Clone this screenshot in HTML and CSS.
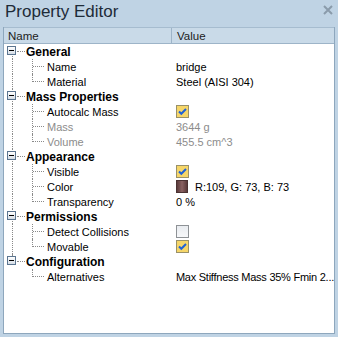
FILE: index.html
```html
<!DOCTYPE html>
<html>
<head>
<meta charset="utf-8">
<link rel="stylesheet" href="styles.css">
</head>
<body>
<div class="window">
  <div class="titlebar">
    <span class="title">Property Editor</span>
    <svg class="close" width="10" height="10" viewBox="0 0 10 10"><path d="M1 1 L9 9 M9 1 L1 9" stroke="#8a9bab" stroke-width="2"/></svg>
  </div>
  <div class="panel">
    <div class="header">
      <div class="hcell hname">Name</div>
      <div class="hcell hvalue">Value</div>
    </div>
    <div class="rows">
      <div class="row group first">
        <div class="name"><span class="i1"><span class="box"></span></span><b>General</b></div>
        <div class="value"></div>
      </div>
      <div class="row child">
        <div class="name"><span class="i1"></span><span class="i2"></span>Name</div>
        <div class="value">bridge</div>
      </div>
      <div class="row child lastchild">
        <div class="name"><span class="i1"></span><span class="i2"></span>Material</div>
        <div class="value">Steel (AISI 304)</div>
      </div>

      <div class="row group">
        <div class="name"><span class="i1"><span class="box"></span></span><b>Mass Properties</b></div>
        <div class="value"></div>
      </div>
      <div class="row child">
        <div class="name"><span class="i1"></span><span class="i2"></span>Autocalc Mass</div>
        <div class="value"><span class="check on"><svg width="11" height="11" viewBox="0 0 11 11"><path d="M2 5.5 L4.3 7.8 L9 3" fill="none" stroke="#1f62d6" stroke-width="2"/></svg></span></div>
      </div>
      <div class="row child dim">
        <div class="name"><span class="i1"></span><span class="i2"></span>Mass</div>
        <div class="value">3644 g</div>
      </div>
      <div class="row child dim lastchild">
        <div class="name"><span class="i1"></span><span class="i2"></span>Volume</div>
        <div class="value">455.5 cm^3</div>
      </div>

      <div class="row group">
        <div class="name"><span class="i1"><span class="box"></span></span><b>Appearance</b></div>
        <div class="value"></div>
      </div>
      <div class="row child">
        <div class="name"><span class="i1"></span><span class="i2"></span>Visible</div>
        <div class="value"><span class="check on"><svg width="11" height="11" viewBox="0 0 11 11"><path d="M2 5.5 L4.3 7.8 L9 3" fill="none" stroke="#1f62d6" stroke-width="2"/></svg></span></div>
      </div>
      <div class="row child">
        <div class="name"><span class="i1"></span><span class="i2"></span>Color</div>
        <div class="value"><span class="swatch"></span>R:109, G: 73, B: 73</div>
      </div>
      <div class="row child lastchild">
        <div class="name"><span class="i1"></span><span class="i2"></span>Transparency</div>
        <div class="value">0 %</div>
      </div>

      <div class="row group">
        <div class="name"><span class="i1"><span class="box"></span></span><b>Permissions</b></div>
        <div class="value"></div>
      </div>
      <div class="row child">
        <div class="name"><span class="i1"></span><span class="i2"></span>Detect Collisions</div>
        <div class="value"><span class="check off"></span></div>
      </div>
      <div class="row child lastchild">
        <div class="name"><span class="i1"></span><span class="i2"></span>Movable</div>
        <div class="value"><span class="check on"><svg width="11" height="11" viewBox="0 0 11 11"><path d="M2 5.5 L4.3 7.8 L9 3" fill="none" stroke="#1f62d6" stroke-width="2"/></svg></span></div>
      </div>

      <div class="row group lastgroup">
        <div class="name"><span class="i1"><span class="box"></span></span><b>Configuration</b></div>
        <div class="value"></div>
      </div>
      <div class="row child lastchild end">
        <div class="name"><span class="i1"></span><span class="i2"></span>Alternatives</div>
        <div class="value"><span class="long">Max Stiffness Mass 35% Fmin 2...</span></div>
      </div>
    </div>
  </div>
</div>
</body>
</html>
```

FILE: styles.css
```css
html, body {
  margin: 0;
  padding: 0;
}
body {
  width: 338px;
  height: 337px;
  overflow: hidden;
  font-family: "Liberation Sans", Arial, sans-serif;
  font-size: 11px;
  color: #000;
}
.window {
  width: 338px;
  height: 337px;
  background: #bfd3e4;
  display: flex;
  flex-direction: column;
  box-sizing: border-box;
  padding: 0 3px 3px 3px;
}
.titlebar {
  height: 27px;
  display: flex;
  align-items: center;
  justify-content: space-between;
  flex: none;
}
.title {
  font-size: 17px;
  color: #1e2b38;
  padding-left: 2px;
  margin-top: -3px;
}
.close {
  margin-right: 2px;
  margin-top: -7px;
}
.panel {
  flex: 1;
  background: #fff;
  border: 1px solid #8ea7bd;
  border-top: none;
  display: flex;
  flex-direction: column;
}
.header {
  height: 15px;
  display: flex;
  background: #c9dae8;
  border-top: 1px solid #a6bccf;
  border-bottom: 1px solid #9db4c8;
  flex: none;
}
.hcell {
  display: flex;
  align-items: center;
  padding-left: 4px;
  color: #1c1c1c;
  font-size: 11.5px;
}
.hname {
  width: 163px;
  border-right: 1px solid #9db4c8;
}
.hvalue {
  flex: 1;
  padding-left: 5px;
}
.rows {
  display: flex;
  flex-direction: column;
}
.row {
  height: 15px;
  display: flex;
  align-items: stretch;
}
.name {
  width: 172px;
  display: flex;
  align-items: center;
  white-space: nowrap;
}
.value {
  flex: 1;
  display: flex;
  align-items: center;
  white-space: nowrap;
}
.long {
  letter-spacing: -0.25px;
}
.dim .name, .dim .value {
  color: #8c8c8c;
}
.group b {
  font-weight: bold;
  font-size: 12px;
  margin-left: 3px;
}
.i1 {
  width: 19px;
  align-self: stretch;
  position: relative;
  flex: none;
}
.i1::before {
  content: "";
  position: absolute;
  left: 8px;
  top: 0;
  bottom: 0;
  border-left: 1px dotted #8a8a8a;
}
.first .i1::before {
  top: 7px;
}
.lastgroup .i1::before {
  bottom: 7px;
}
.end .i1::before {
  display: none;
}
.group .i1::after {
  content: "";
  position: absolute;
  left: 13px;
  width: 8px;
  top: 7px;
  border-top: 1px dotted #8a8a8a;
}
.box {
  position: absolute;
  left: 3px;
  top: 2px;
  width: 9px;
  height: 9px;
  box-sizing: border-box;
  border: 1px solid #5b7590;
  background: linear-gradient(#ffffff, #d5dde6);
  z-index: 1;
}
.box::after {
  content: "";
  position: absolute;
  left: 1px;
  top: 3px;
  width: 5px;
  height: 1px;
  background: #000;
}
.i2 {
  width: 24px;
  align-self: stretch;
  position: relative;
  flex: none;
}
.i2::before {
  content: "";
  position: absolute;
  left: 9px;
  top: 0;
  bottom: 0;
  border-left: 1px dotted #8a8a8a;
}
.lastchild .i2::before {
  bottom: 7px;
}
.i2::after {
  content: "";
  position: absolute;
  left: 10px;
  width: 11px;
  top: 7px;
  border-top: 1px dotted #8a8a8a;
}
.check {
  width: 13px;
  height: 13px;
  box-sizing: border-box;
  border: 1px solid #8b8b8b;
  display: flex;
  align-items: center;
  justify-content: center;
}
.check.on {
  background: #f6d669;
  border-color: #9a9168;
}
.check.off {
  background: linear-gradient(#e9ecf0, #f7f8fa);
  border-color: #8e9296;
}
.swatch {
  width: 12px;
  height: 13px;
  box-sizing: border-box;
  border: 1px solid #4a3232;
  background: linear-gradient(90deg, #5a3a3a, #8a6262 50%, #5a3a3a);
  margin-right: 7px;
}
```
